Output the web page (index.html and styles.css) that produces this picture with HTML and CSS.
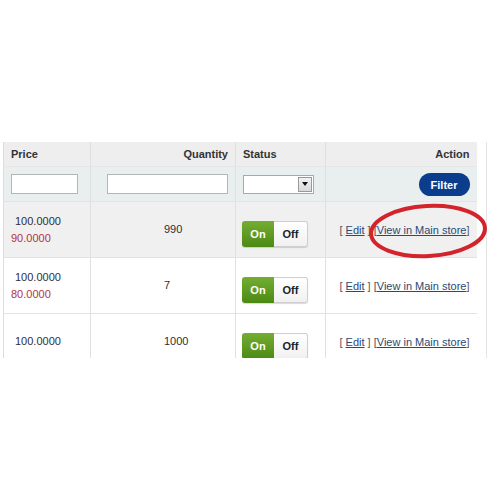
FILE: index.html
```
<!DOCTYPE html>
<html lang="en">

<head>
    <meta charset="UTF-8">
    <title>Products</title>
    <link rel="stylesheet" href="styles.css">
</head>

<body>
    <div class="frame">
        <div class="grid-wrap">
            <table class="grid">
                <colgroup>
                    <col class="col-price">
                    <col class="col-qty">
                    <col class="col-status">
                    <col class="col-action">
                </colgroup>
                <tr class="headings">
                    <th class="left">Price</th>
                    <th class="right">Quantity</th>
                    <th class="left">Status</th>
                    <th class="right">Action</th>
                </tr>
                <tr class="filter">
                    <td><input class="input-price" type="text"></td>
                    <td class="qty-filter"><input class="input-qty" type="text"></td>
                    <td>
                        <div class="select">
                            <span class="select-arrow"><span class="tri"></span></span>
                        </div>
                    </td>
                    <td class="right"><button class="btn-filter">Filter</button></td>
                </tr>
                <tr class="row hover">
                    <td class="price">
                        <div class="base">100.0000</div>
                        <div class="special">90.0000</div>
                    </td>
                    <td class="qty">990</td>
                    <td class="status">
                        <div class="toggle"><span class="on">On</span><span class="off">Off</span></div>
                    </td>
                    <td class="action">[ <a href="#">Edit</a> ] [<a href="#">View in Main store</a>]</td>
                </tr>
                <tr class="row">
                    <td class="price">
                        <div class="base">100.0000</div>
                        <div class="special">80.0000</div>
                    </td>
                    <td class="qty">7</td>
                    <td class="status">
                        <div class="toggle"><span class="on">On</span><span class="off">Off</span></div>
                    </td>
                    <td class="action">[ <a href="#">Edit</a> ] [<a href="#">View in Main store</a>]</td>
                </tr>
                <tr class="row">
                    <td class="price">
                        <div class="base">100.0000</div>
                    </td>
                    <td class="qty">1000</td>
                    <td class="status">
                        <div class="toggle"><span class="on">On</span><span class="off">Off</span></div>
                    </td>
                    <td class="action">[ <a href="#">Edit</a> ] [<a href="#">View in Main store</a>]</td>
                </tr>
            </table>
            <div class="side-line"></div>
        </div>

        <svg class="circle" width="130" height="64" viewBox="0 0 130 64">
            <ellipse cx="64" cy="30" rx="57" ry="25" fill="none" stroke="#d3232b" stroke-width="4"
                transform="rotate(-3 64 30)" />
        </svg>
    </div>
</body>

</html>
```

FILE: styles.css
```
body {
    margin: 0;
    font-family: 'Liberation Sans', Arial, sans-serif;
    font-size: 11px;
    color: #333;
    background: #fff;
}

.frame {
    position: relative;
    width: 500px;
    height: 358px;
    padding-top: 142px;
    box-sizing: border-box;
    overflow: hidden;
}

.grid-wrap {
    display: flex;
    padding-left: 3px;
}

.grid {
    width: 473px;
    border-collapse: collapse;
    table-layout: fixed;
    border-left: 1px solid #ddd;
}

.col-price { width: 87px; }
.col-qty { width: 145px; }
.col-status { width: 90px; }
.col-action { width: 151px; }

.grid td,
.grid th {
    border-right: 1px solid #e0e0e0;
    border-bottom: 1px solid #e3e3e3;
    padding: 0 7px;
}

.grid td:last-child,
.grid th:last-child {
    border-right: none;
}

.left { text-align: left; }
.right { text-align: right; }

.headings th {
    height: 24px;
    background: #eeeeee;
    font-weight: bold;
    font-size: 11px;
    color: #333;
    border-bottom-color: #e6e6e6;
}

.filter td {
    height: 34px;
    background: #e9eeee;
}

.filter input {
    height: 20px;
    box-sizing: border-box;
    border: 1px solid #b5b5b5;
    background: #fff;
    padding: 0;
    margin: 0;
    display: block;
}

.input-price { width: 67px; }
.input-qty { width: 121px; margin-left: 9px !important; }

.grid .qty-filter { padding-left: 7px; }

.select {
    width: 71px;
    height: 19px;
    box-sizing: border-box;
    border: 1px solid #aaa;
    background: #fff;
    display: flex;
    justify-content: flex-end;
    align-items: center;
    padding-right: 1px;
}

.select-arrow {
    width: 14px;
    height: 15px;
    box-sizing: border-box;
    background: linear-gradient(#f2f2f2, #d9d9d9);
    border: 1px solid #999;
    display: flex;
    justify-content: center;
    align-items: center;
}

.tri {
    width: 0;
    height: 0;
    border-left: 3px solid transparent;
    border-right: 3px solid transparent;
    border-top: 4px solid #111;
}

.btn-filter {
    width: 51px;
    height: 23px;
    border: none;
    border-radius: 12px;
    background: #0b3d8c;
    color: #fff;
    font-family: inherit;
    font-size: 11px;
    font-weight: bold;
    padding: 0;
    margin-top: 1px;
}

.row td {
    height: 54px;
    background: #fff;
}

.row.hover td {
    background: #f0f0f0;
}

.price {
    line-height: 17px;
}

.price .base {
    padding-left: 4px;
    color: #2f2d38;
}

.price .special {
    color: #b4323f;
}

.grid .qty {
    padding-left: 73px;
    padding-bottom: 1px;
    color: #2f2d38;
}

.grid .status {
    padding-left: 6px;
}

.toggle {
    display: flex;
    width: 66px;
    height: 26px;
    margin-top: 8px;
    border-radius: 3px;
    box-shadow: 0 1px 1px rgba(0, 0, 0, 0.15);
}

.toggle span {
    display: flex;
    align-items: center;
    justify-content: center;
    font-weight: bold;
    font-size: 11px;
}

.toggle .on {
    width: 32px;
    background: linear-gradient(#74ad32, #4c8a14);
    color: #fff;
    border-radius: 3px 0 0 3px;
}

.toggle .off {
    width: 34px;
    box-sizing: border-box;
    background: linear-gradient(#ffffff, #f1f1f1);
    border: 1px solid #cfcfcf;
    border-left: none;
    border-radius: 0 3px 3px 0;
    color: #222;
}

.action {
    text-align: right;
    color: #555;
    white-space: nowrap;
    padding-bottom: 3px;
}

.action a {
    color: #2b4a72;
    text-decoration: underline;
}

.side-line {
    width: 1px;
    margin-left: 9px;
    background: #e4e4e4;
}

.circle {
    position: absolute;
    left: 364px;
    top: 201px;
}
```
